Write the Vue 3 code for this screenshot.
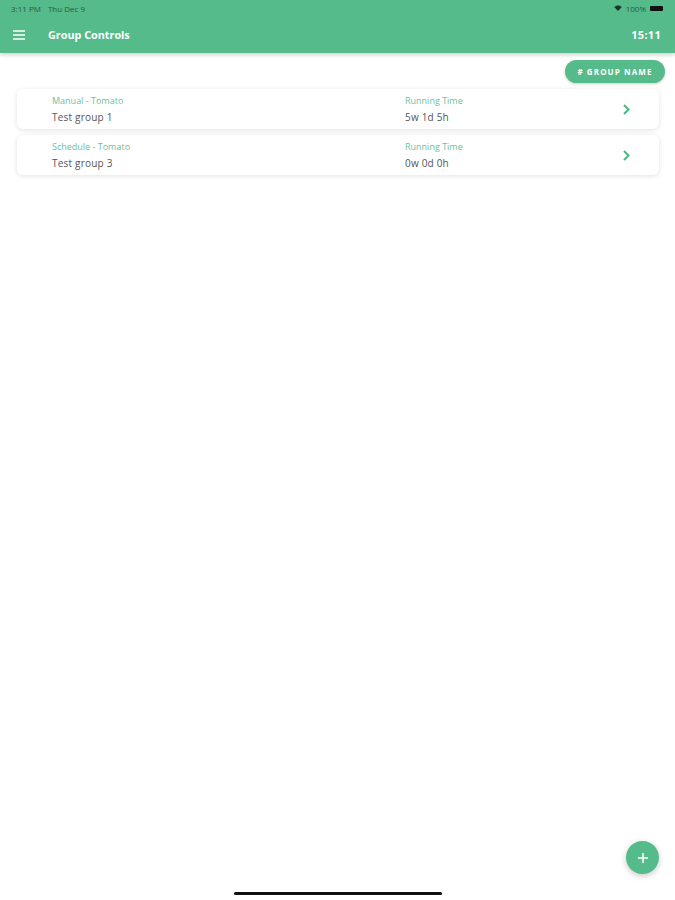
<script setup>
const groups = [
  { type: 'Manual - Tomato', name: 'Test group 1', time: '5w 1d 5h' },
  { type: 'Schedule - Tomato', name: 'Test group 3', time: '0w 0d 0h' },
]
</script>

<template>
  <div class="page">
    <header class="top">
      <div class="status">
        <span>3:11 PM</span>
        <span class="date">Thu Dec 9</span>
        <span class="status-right">
          <svg width="8" height="6" viewBox="0 0 10 8">
            <path d="M0 2.6 C2.8 -0.2 7.2 -0.2 10 2.6 L5 8 Z" fill="#17352a" />
          </svg>
          <span class="pct">100%</span>
          <span class="battery"></span>
        </span>
      </div>
      <div class="toolbar">
        <svg class="menu" width="12" height="10" viewBox="0 0 12 10">
          <path d="M0 1h12M0 5h12M0 9h12" stroke="#fff" stroke-width="1.5" fill="none" />
        </svg>
        <span class="title">Group Controls</span>
        <span class="clock">15:11</span>
      </div>
    </header>

    <main class="content">
      <div class="actions">
        <button class="sort"># GROUP NAME</button>
      </div>
      <div v-for="g in groups" :key="g.name" class="card">
        <div class="col-left">
          <p class="label">{{ g.type }}</p>
          <p class="value">{{ g.name }}</p>
        </div>
        <div class="col-time">
          <p class="label">Running Time</p>
          <p class="value">{{ g.time }}</p>
        </div>
        <svg class="chevron" width="7" height="11" viewBox="0 0 7 11">
          <path d="M1 1l4.5 4.5L1 10" stroke="#4fb388" stroke-width="2" fill="none" />
        </svg>
      </div>
    </main>

    <button class="fab">
      <svg width="10" height="10" viewBox="0 0 10 10">
        <path d="M5 0v10M0 5h10" stroke="#fff" stroke-width="1.5" fill="none" />
      </svg>
    </button>
    <div class="home-bar"></div>
  </div>
</template>

<style scoped>
.page {
  position: relative;
  width: 675px;
  height: 900px;
  overflow: hidden;
  background: #fff;
  font-family: 'Open Sans', 'Liberation Sans', sans-serif;
}

p {
  margin: 0;
}

.top {
  height: 53px;
  background: #55bb8b;
  box-shadow: 0 2px 4px rgba(0, 0, 0, 0.18);
}

.status {
  display: flex;
  align-items: center;
  height: 16px;
  padding: 0 12px 0 11px;
  font-size: 8px;
  color: #2a5a45;
}

.date {
  margin-left: 7px;
}

.status-right {
  display: flex;
  align-items: center;
  margin-left: auto;
  gap: 4px;
}

.battery {
  width: 13px;
  height: 5px;
  border-radius: 1px;
  background: #111;
}

.toolbar {
  display: flex;
  align-items: center;
  height: 37px;
  padding: 0 14px 0 13px;
  color: #fff;
}

.title {
  margin-left: 23px;
  font-size: 10.8px;
  font-weight: 700;
}

.clock {
  margin-left: auto;
  font-size: 11px;
  font-weight: 700;
  letter-spacing: 0.3px;
}

.content {
  padding: 7px 10px 0 17px;
}

.actions {
  display: flex;
  justify-content: flex-end;
  height: 23px;
}

.sort {
  height: 23px;
  padding: 0 12.5px;
  border: none;
  border-radius: 12px;
  background: #55bb8b;
  color: #fff;
  font-family: inherit;
  font-size: 8px;
  font-weight: 700;
  letter-spacing: 1.1px;
  box-shadow: 0 1px 3px rgba(0, 0, 0, 0.2);
}

.card {
  display: flex;
  align-items: center;
  width: 642px;
  height: 40px;
  margin-top: 6px;
  box-sizing: border-box;
  padding-left: 35px;
  border-radius: 6px;
  background: #fff;
  box-shadow: 0 1px 5px rgba(0, 0, 0, 0.12);
}

.col-left {
  width: 353px;
  padding-top: 1px;
}

.col-time {
  width: 218px;
  padding-top: 1px;
}

.label {
  font-size: 9px;
  line-height: 12px;
  color: #6cc29b;
}

.value {
  margin-top: 3px;
  font-size: 10px;
  line-height: 14px;
  letter-spacing: 0.2px;
  color: #555;
}

.fab {
  position: absolute;
  top: 841px;
  left: 626px;
  display: flex;
  align-items: center;
  justify-content: center;
  width: 33px;
  height: 33px;
  padding: 0;
  border: none;
  border-radius: 50%;
  background: #55bb8b;
  box-shadow: 0 2px 6px rgba(0, 0, 0, 0.22);
}

.home-bar {
  position: absolute;
  top: 892px;
  left: 234px;
  width: 208px;
  height: 3px;
  border-radius: 2px;
  background: #111;
}
</style>
